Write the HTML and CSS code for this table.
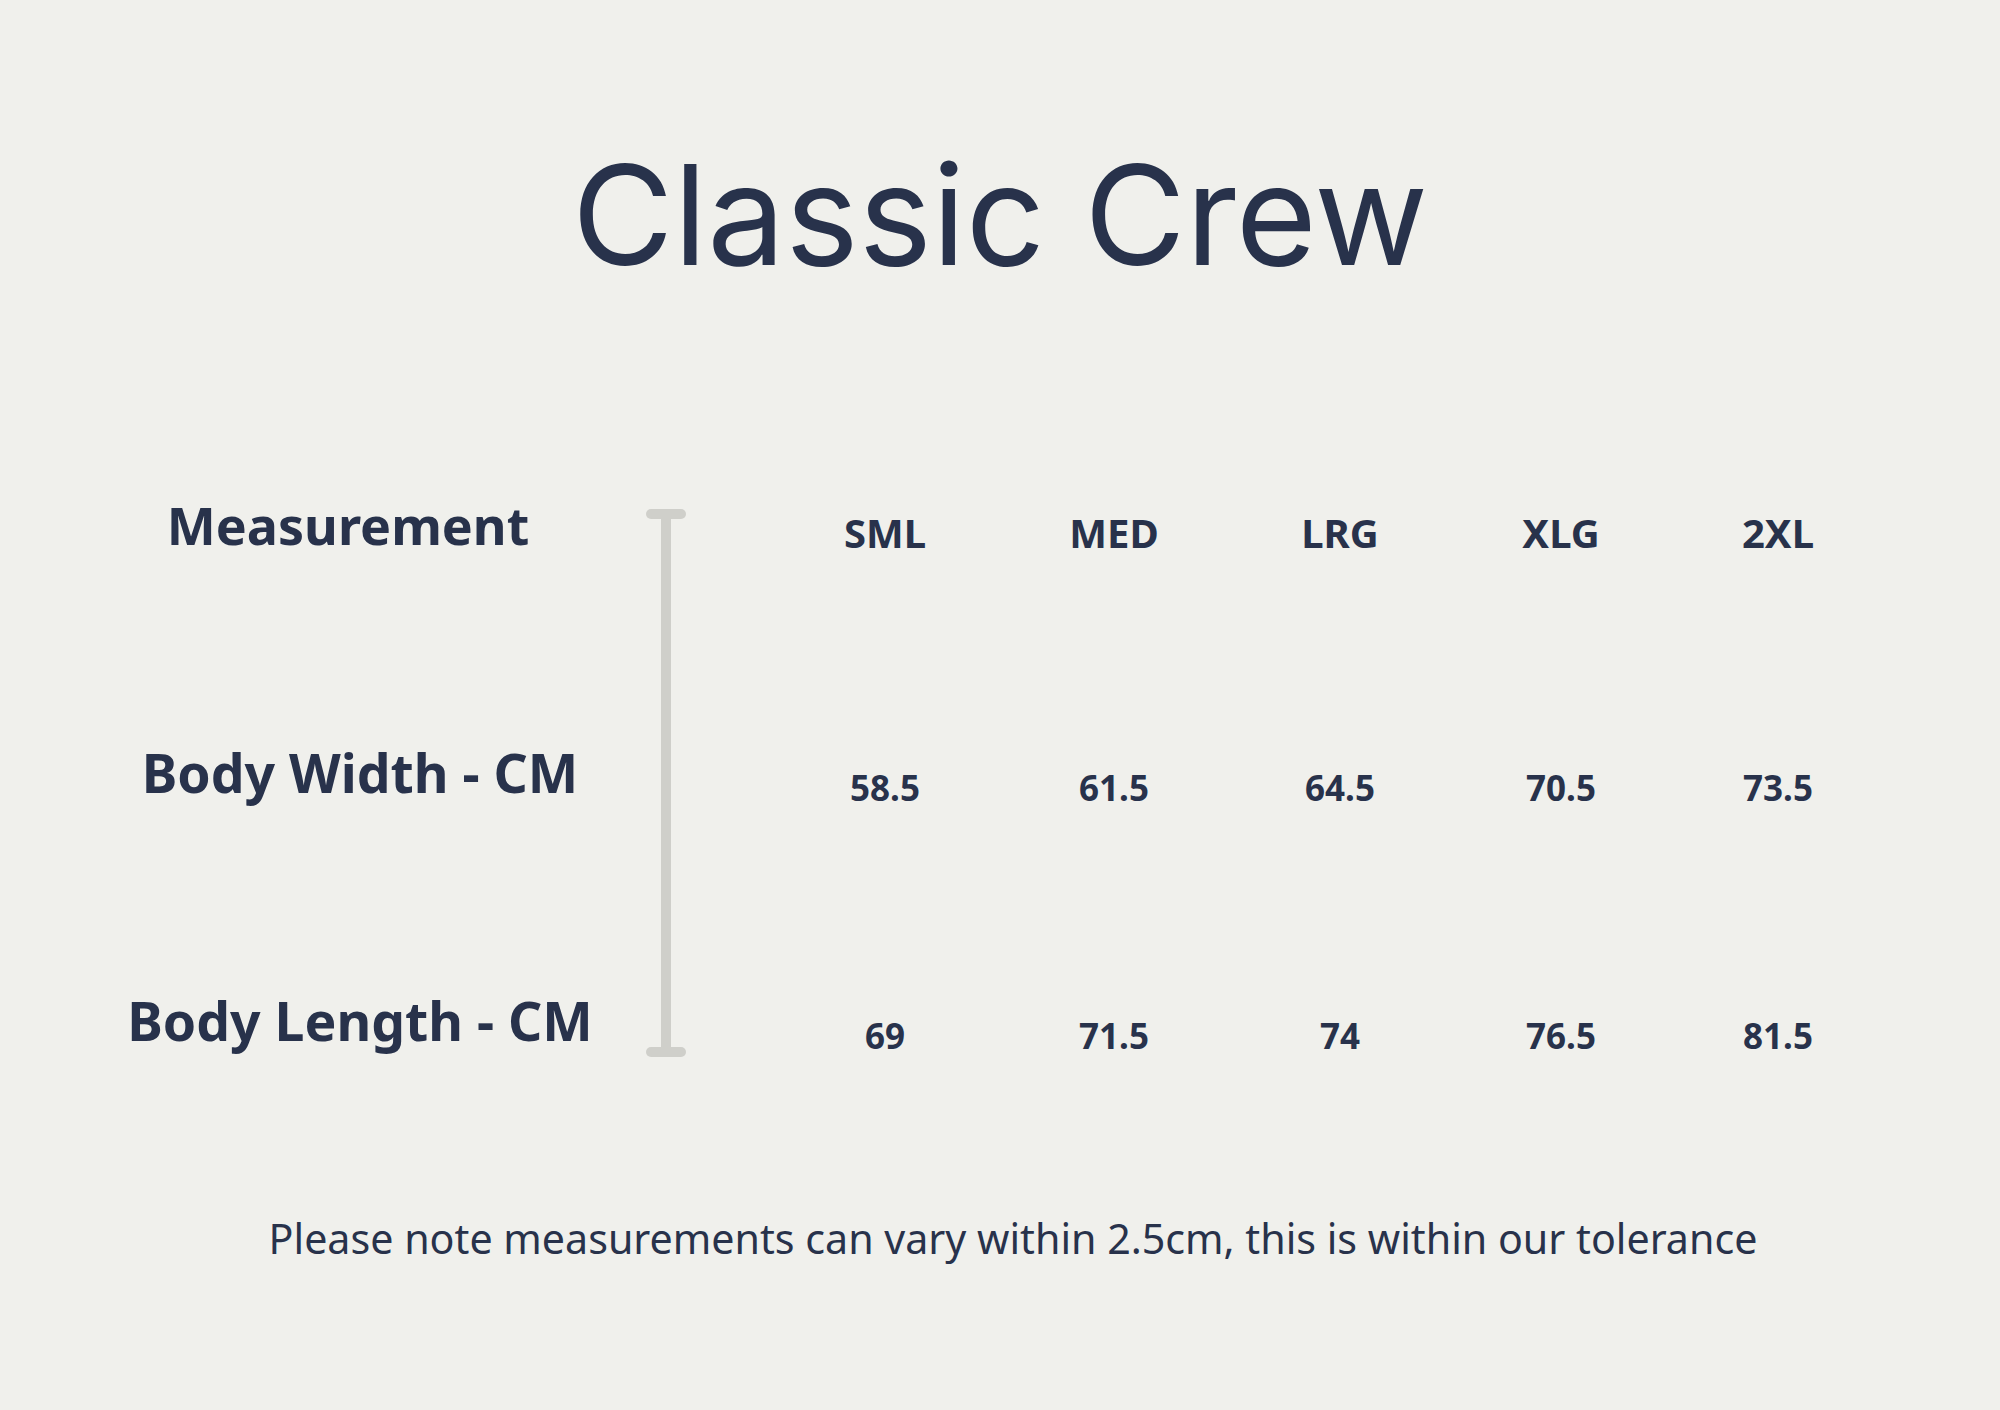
FILE: index.html
```html
<!DOCTYPE html>
<html lang="en">
<head>
<meta charset="utf-8">
<title>Classic Crew – Size Chart</title>
<link rel="stylesheet" href="styles.css">
</head>
<body>
<main class="sheet">
  <h1 class="title">Classic Crew</h1>
  <section class="chart">
    <div class="label label-head">Measurement</div>
    <div class="divider" aria-hidden="true">
      <span class="cap"></span>
      <span class="stem"></span>
      <span class="cap"></span>
    </div>
    <div class="head">SML</div>
    <div class="head">MED</div>
    <div class="head">LRG</div>
    <div class="head">XLG</div>
    <div class="head">2XL</div>

    <div class="label">Body Width - CM</div>
    <div class="val">58.5</div>
    <div class="val">61.5</div>
    <div class="val">64.5</div>
    <div class="val">70.5</div>
    <div class="val">73.5</div>

    <div class="label">Body Length - CM</div>
    <div class="val">69</div>
    <div class="val">71.5</div>
    <div class="val">74</div>
    <div class="val">76.5</div>
    <div class="val">81.5</div>
  </section>
  <p class="note">Please note measurements can vary within 2.5cm, this is within our tolerance</p>
</main>
</body>
</html>
```
FILE: styles.css
```css
html, body {
  margin: 0;
  padding: 0;
  background: #f0f0ec;
}

.sheet {
  width: 2000px;
  height: 1410px;
  box-sizing: border-box;
  padding-top: 140px;
  color: #28324b;
  font-family: "Noto Sans", "DejaVu Sans", sans-serif;
}

.title {
  margin: 0;
  text-align: center;
  font-family: Inter, "Noto Sans", sans-serif;
  font-weight: 400;
  font-size: 139px;
  line-height: 150px;
  letter-spacing: 0;
}

.chart {
  margin-top: 195px;
  padding-left: 110px;
  display: grid;
  grid-template-columns: 536px 124px 230px 228px 224px 218px 216px;
  grid-template-rows: 248px 248px 100px;
  align-items: start;
}

.label {
  grid-column: 1;
  padding-right: 36px;
  text-align: center;
  font-weight: 700;
  font-size: 53.5px;
  line-height: 80px;
  white-space: nowrap;
}

.label-head {
  font-size: 52px;
  padding-right: 60px;
}

.divider {
  grid-column: 2;
  grid-row: 1 / span 3;
  margin-top: 24px;
  width: 40px;
  height: 548px;
  display: flex;
  flex-direction: column;
  align-items: center;
}

.cap {
  width: 40px;
  height: 10px;
  border-radius: 5px;
  background: #cfcfca;
  flex: none;
}

.stem {
  width: 10px;
  flex: 1;
  background: #cfcfca;
}

.head,
.val {
  text-align: center;
  font-weight: 700;
  line-height: 80px;
}

.head {
  font-size: 40px;
  padding-top: 8px;
}

.val {
  font-size: 35px;
  padding-top: 15px;
}

.note {
  margin: 127px 0 0;
  padding-left: 26px;
  text-align: center;
  font-size: 41.2px;
  line-height: 60px;
  font-weight: 400;
}
```
